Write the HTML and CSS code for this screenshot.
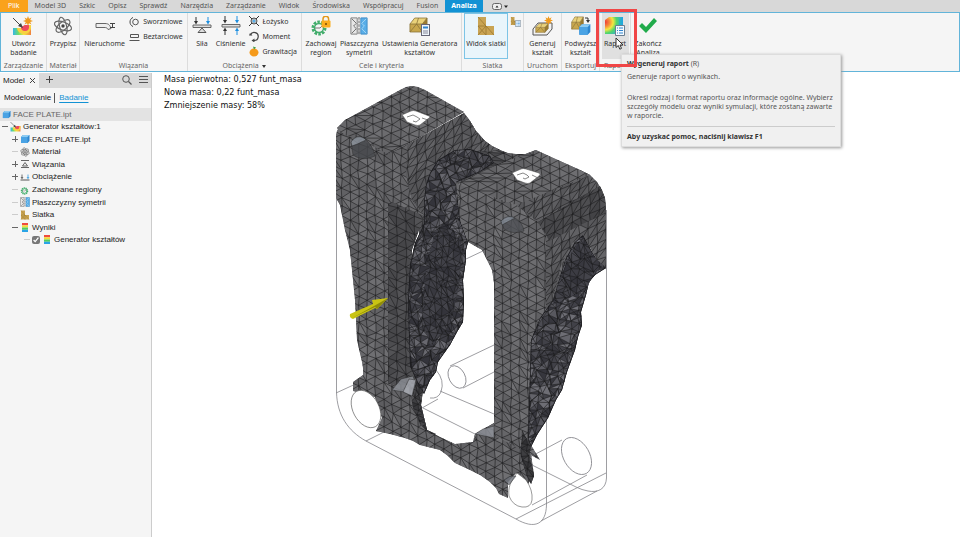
FILE: index.html
```html
<!DOCTYPE html>
<html lang="pl">
<head>
    <meta charset="UTF-8">
    <meta name="viewport" content="width=device-width, initial-scale=1.0">
    <title>FACE PLATE.ipt</title>
    <link rel="stylesheet" href="styles.css">
</head>
<body>
    <svg class="defs" aria-hidden="true">
        <defs>
            <linearGradient id="heat" x1="0" y1="0" x2="1" y2="0">
                <stop offset="0" stop-color="#35b6e8"/>
                <stop offset=".3" stop-color="#6fdc6a"/>
                <stop offset=".6" stop-color="#f5e642"/>
                <stop offset="1" stop-color="#f0803c"/>
            </linearGradient>
            <radialGradient id="spot" cx="0" cy=".3" r="1">
                <stop offset="0" stop-color="#ee3a3a"/>
                <stop offset=".25" stop-color="#f58a3c"/>
                <stop offset=".45" stop-color="#f5e642"/>
                <stop offset=".65" stop-color="#52d66a"/>
                <stop offset="1" stop-color="#29a5e8"/>
            </radialGradient>
            <symbol id="i-cube" viewBox="0 0 10 10">
                <path d="M1 3L3 1h6.500v6L7.500 9H1z" fill="#2d86cf"/>
                <path d="M1 3h6.500v6H1z" fill="#4aa3e4"/>
                <path d="M1 3l2-2h6.500l-2 2z" fill="#8ccbf2"/>
            </symbol>
            <symbol id="i-atom" viewBox="0 0 20 20">
                <g fill="none" stroke="#666" stroke-width="1.200">
                    <ellipse cx="10" cy="10" rx="9" ry="4" transform="rotate(20 10 10)"/>
                    <ellipse cx="10" cy="10" rx="9" ry="3.500" transform="rotate(75 10 10)"/>
                    <ellipse cx="10" cy="10" rx="8.500" ry="4" transform="rotate(-40 10 10)"/>
                </g>
                <circle cx="10" cy="10" r="1.700" fill="#444"/>
            </symbol>
            <symbol id="i-study" viewBox="0 0 20 20">
                <path d="M1 12h8l4-3h6v10H1z" fill="url(#heat)"/>
                <path d="M5 12a7 6 0 0 0 14 0V9h-6l-4 3z" fill="#f7d33f"/>
                <path d="M9 11a4 4 0 0 0 8 0V9h-4z" fill="#ee4a5e"/>
                <path d="M1 2l9 9" stroke="#444" fill="none"/>
                <path d="M11 12L6 10l3-3z" fill="#444"/>
            </symbol>
            <symbol id="i-star" viewBox="0 0 10 10">
                <path d="M5 0l1 2.800L8.500 1.500 7.200 4 10 5 7.200 6l1.300 2.500L6 7.200 5 10 4 7.200 1.500 8.500 2.800 6 0 5l2.800-1L1.500 1.500 4 2.800z" fill="#f09a1c"/>
            </symbol>
            <symbol id="i-siatka" viewBox="0 0 20 20">
                <path d="M2 1h8v9h8v9H2z" fill="#c9a453"/>
                <path d="M2 1l8 9 8 9M2 10h8v9M2 19l8-9M2 10l8 9" fill="none" stroke="#9a7930" stroke-width=".800"/>
            </symbol>
            <symbol id="i-sym" viewBox="0 0 20 20">
                <path d="M1 1h7v18H1z" fill="#e6e6e6" stroke="#777"/>
                <path d="M2 2l5 5-3 3 3 3-5 5" fill="none" stroke="#666"/>
                <path d="M12 1h7v18h-7z" fill="#59aee8" stroke="#3d8ac5"/>
                <path d="M18 2l-5 5 3 3-3 3 5 5" fill="none" stroke="#a8d8f5"/>
                <path d="M10 0v20" stroke="#555" stroke-dasharray="3 1"/>
            </symbol>
            <symbol id="i-gear" viewBox="0 0 20 20">
                <circle cx="9" cy="12" r="6" fill="none" stroke="#43ad6c" stroke-width="3" stroke-dasharray="2.500 1.200"/>
                <circle cx="9" cy="12" r="4.500" fill="none" stroke="#43ad6c" stroke-width="1.500"/>
                <path d="M5 12h5l4-4" fill="none" stroke="#777"/>
            </symbol>
            <symbol id="i-gold" viewBox="0 0 20 16" preserveAspectRatio="none">
                <path d="M1 7l5-6h13l-5 6z" fill="#ead27a"/>
                <path d="M14 7l5-6v8l-5 6z" fill="#9a7a2e"/>
                <path d="M1 7h13v8H1z" fill="#c8a74d"/>
                <path d="M1 7l5-6h13l-5 6zM14 7v8M1 15l7-8 6 8M10 1l-2 6M19 1v8l-5 6H1V7" fill="none" stroke="#8a7338" stroke-width=".800"/>
            </symbol>
            <symbol id="i-legend" viewBox="0 0 10 12">
                <path d="M1 0h8v3H1z" fill="#ef4b3f"/>
                <path d="M1 3h8v3H1z" fill="#f5d93b"/>
                <path d="M1 6h8v3H1z" fill="#52cf5c"/>
                <path d="M1 9h8v3H1z" fill="#2aa4e6"/>
            </symbol>
            <symbol id="i-list" viewBox="0 0 10 11">
                <path d="M.5.5h9v10h-9z" fill="#f4faff" stroke="#6b7f90"/>
                <path d="M2 3h1M4 3h4M2 5.500h1M4 5.500h4M2 8h1M4 8h4" stroke="#2f86d0"/>
            </symbol>
            <symbol id="i-fix" viewBox="0 0 20 20">
                <path d="M2 3h16M2 17h16M5 14l5-7 5 7z" fill="none" stroke="#666" stroke-width="2"/>
            </symbol>
            <symbol id="i-load" viewBox="0 0 20 20">
                <path d="M1 15h18v2H1z" fill="#555"/>
                <path d="M4 5v8M2 10l2 3 2-3" fill="none" stroke="#444" stroke-width="1.500"/>
                <path d="M16 5v8M14 10l2 3 2-3" fill="none" stroke="#2a94dc" stroke-width="1.500"/>
            </symbol>
        </defs>
    </svg>

    <header class="ribbon">
        <nav class="tabs">
            <a class="tab file" href="#">Plik</a>
            <a class="tab" href="#">Model 3D</a>
            <a class="tab" href="#">Szkic</a>
            <a class="tab" href="#">Opisz</a>
            <a class="tab" href="#">Sprawdź</a>
            <a class="tab" href="#">Narzędzia</a>
            <a class="tab" href="#">Zarządzanie</a>
            <a class="tab" href="#">Widok</a>
            <a class="tab" href="#">Środowiska</a>
            <a class="tab" href="#">Współpracuj</a>
            <a class="tab" href="#">Fusion</a>
            <a class="tab active" href="#">Analiza</a>
            <button class="tab-toggle" aria-label="Minimalizuj wstążkę">
                <svg width="16" height="7" viewBox="0 0 16 7"><rect x=".5" y=".5" width="9" height="6" rx="2" fill="#eee" stroke="#666"/><path d="M3.500 4.500L5 2.500l1.500 2zM12 2.500h4l-2 2.500z" fill="#222"/></svg>
            </button>
        </nav>

        <div class="groups">
            <section class="group g-manage">
                <div class="tools">
                    <button class="tool">
                        <svg width="22" height="20" viewBox="0 0 22 20"><use href="#i-study" width="20" height="20"/><use href="#i-star" x="11" y="0" width="10" height="10"/></svg>
                        <span>Utwórz<br>badanie</span>
                    </button>
                </div>
                <h2>Zarządzanie</h2>
            </section>
            <section class="group g-material">
                <div class="tools">
                    <button class="tool">
                        <svg width="20" height="20"><use href="#i-atom"/></svg>
                        <span>Przypisz</span>
                    </button>
                </div>
                <h2>Materiał</h2>
            </section>
            <section class="group g-bind">
                <div class="tools">
                    <button class="tool">
                        <svg width="22" height="20" viewBox="0 0 22 20"><path d="M2 7.500h9c4 0 5 2 6 5l-3 1c-1-2-2-2-4-2H2z" fill="#eee" stroke="#666"/><path d="M16 7.500h5M16 11.500h5M18.500 7.500v4" stroke="#444" fill="none"/></svg>
                        <span>Nieruchome</span>
                    </button>
                    <div class="stack">
                        <button><svg width="11" height="10" viewBox="0 0 11 10"><circle cx="6.500" cy="5" r="2.800" fill="none" stroke="#555"/><path d="M4 .5C0 2 0 8 4 9.500" fill="none" stroke="#444"/></svg>Sworzniowe</button>
                        <button><svg width="11" height="10" viewBox="0 0 11 10"><path d="M1.500 2.500h8v3h-8zM.5 8.500h10" fill="none" stroke="#555"/></svg>Beztarciowe</button>
                    </div>
                </div>
                <h2>Wiązania</h2>
            </section>
            <section class="group g-loads">
                <div class="tools">
                    <button class="tool">
                        <svg width="20" height="20" viewBox="0 0 20 20"><path d="M1 9h18v2.500H1z" fill="#ddd" stroke="#666"/><path d="M10 12l4 4.500H6z" fill="#ddd" stroke="#555"/><path d="M4 1v5" stroke="#333"/><path d="M2 5h4L4 8.500z" fill="#333"/><path d="M16 1v5" stroke="#1e8fe0"/><path d="M14 5h4l-2 3.500z" fill="#1e8fe0"/></svg>
                        <span>Siła</span>
                    </button>
                    <button class="tool">
                        <svg width="20" height="20" viewBox="0 0 20 20"><path d="M1 8.500h18v2.500H1z" fill="#ddd" stroke="#666"/><path d="M4 0v5M4 14v5" stroke="#333"/><path d="M2 4h4L4 7.500zM2 15h4l-2-3.500z" fill="#333"/><path d="M16 0v5M16 14v5" stroke="#1e8fe0"/><path d="M14 4h4l-2 3.500zM14 15h4l-2-3.500z" fill="#1e8fe0"/></svg>
                        <span>Ciśnienie</span>
                    </button>
                    <div class="stack">
                        <button><svg width="10" height="11" viewBox="0 0 10 11"><circle cx="5" cy="5" r="3" fill="#bbb" stroke="#555"/><path d="M0 0l3 3M10 0L7 3M0 10l3-3M10 10L7 7" stroke="#333"/><circle cx="5" cy="5" r="1.500" fill="#59aee8"/></svg>Łożysko</button>
                        <button><svg width="10" height="11" viewBox="0 0 10 11"><path d="M1.500 4A4 4 0 1 1 5 9.500" fill="none" stroke="#444" stroke-width="1.200"/><path d="M5.500 7.500v4L2.500 9.500zM0 4.500h3.500L1 2z" fill="#444"/></svg>Moment</button>
                        <button><svg width="10" height="11" viewBox="0 0 10 11"><ellipse cx="5" cy="6.500" rx="4.500" ry="4" fill="#f59a1b"/><path d="M5 3.500L4 .5l3 1z" fill="#3f9a43"/></svg>Grawitacja</button>
                    </div>
                </div>
                <h2>Obciążenia <i class="caret"></i></h2>
            </section>
            <section class="group g-goals">
                <div class="tools">
                    <button class="tool">
                        <svg width="22" height="20" viewBox="0 0 22 20"><use href="#i-gear" width="20" height="20"/><path d="M13 5V3a2.800 2.800 0 0 1 5.600 0v2" fill="none" stroke="#e2981a" stroke-width="1.500"/><rect x="11.500" y="4.500" width="9" height="7" rx="1" fill="#fbad1d"/><circle cx="16" cy="8" r="1" fill="#7b4d00"/></svg>
                        <span>Zachowaj<br>region</span>
                    </button>
                    <button class="tool">
                        <svg width="18" height="20"><use href="#i-sym"/></svg>
                        <span>Płaszczyzna<br>symetrii</span>
                    </button>
                    <button class="tool">
                        <svg width="22" height="20" viewBox="0 0 22 20"><use href="#i-gold" width="19" height="16" y="1"/><rect x="12.500" y="8.500" width="8" height="11" fill="#eef5fb" stroke="#667"/><path d="M14 10.500h5v2h-5z" fill="#2f86d0"/><path d="M14 15h5M14 17h5" stroke="#889"/></svg>
                        <span>Ustawienia Generatora<br>kształtów</span>
                    </button>
                </div>
                <h2>Cele i kryteria</h2>
            </section>
            <section class="group g-mesh">
                <div class="tools">
                    <button class="tool pressed">
                        <svg width="20" height="20"><use href="#i-siatka"/></svg>
                        <span>Widok siatki</span>
                    </button>
                    <button class="tool-small" aria-label="Ustawienia siatki"><svg width="11" height="11" viewBox="0 0 11 11"><use href="#i-siatka" width="9" height="10"/><use href="#i-list" x="5" y="4" width="6" height="7"/></svg></button>
                </div>
                <h2>Siatka</h2>
            </section>
            <section class="group g-run">
                <div class="tools">
                    <button class="tool">
                        <svg width="22" height="20" viewBox="0 0 22 20"><path d="M1 13l5-6h14v6l-5 6H1z" fill="#f2f2f2" stroke="#555"/><use href="#i-gold" x="3" y="7" width="14" height="10"/><use href="#i-star" x="12" width="9" height="9"/></svg>
                        <span>Generuj<br>kształt</span>
                    </button>
                </div>
                <h2>Uruchom</h2>
            </section>
            <section class="group g-export">
                <div class="tools">
                    <button class="tool">
                        <svg width="22" height="20" viewBox="0 0 22 20"><use href="#i-gold" x="1" width="13" height="14"/><use href="#i-cube" x="8" y="7" width="13" height="13"/><path d="M15 2h3v3" fill="none" stroke="#333"/><path d="M16 4h4l-2 3z" fill="#333"/></svg>
                        <span>Podwyższ<br>kształt</span>
                    </button>
                </div>
                <h2>Eksportuj</h2>
            </section>
            <section class="group g-report">
                <div class="tools">
                    <button class="tool hover" aria-describedby="tip">
                        <svg width="22" height="20" viewBox="0 0 22 20"><path d="M1 4l4-3h14v13l-4 4H1z" fill="url(#spot)"/><path d="M15 4l4-3v13l-4 4z" fill="#18a7dc" opacity=".5"/><use href="#i-list" x="11" y="9" width="10" height="11"/></svg>
                        <span>Raport</span>
                    </button>
                </div>
                <h2>Raport</h2>
                <div class="highlight"></div>
                <svg class="cursor" width="9" height="13" viewBox="0 0 9 13"><path d="M1 1v9.500l2.300-2 1.500 3.700 1.700-.800L5 8h3z" fill="#fff" stroke="#333"/></svg>
                <div class="tooltip" id="tip" role="tooltip">
                    <p><b>Wygeneruj raport</b> (R)</p>
                    <p class="lead">Generuje raport o wynikach.</p>
                    <p class="text">Określ rodzaj i format raportu oraz informacje ogólne. Wybierz<br>szczegóły modelu oraz wyniki symulacji, które zostaną zawarte<br>w raporcie.</p>
                    <p class="help"><b>Aby uzyskać pomoc, naciśnij klawisz F1</b></p>
                </div>
            </section>
            <section class="group g-end">
                <div class="tools">
                    <button class="tool">
                        <svg width="20" height="20" viewBox="0 0 20 20"><path d="M1 10l3-3 4 4L16 2l3 3L8 17z" fill="#21ab4b"/></svg>
                        <span>Zakończ<br>Analiza</span>
                    </button>
                </div>
            </section>
        </div>
    </header>

    <div class="workspace">
        <aside class="browser">
            <div class="browser-tabs">
                <button class="browser-tab">Model <svg width="7" height="7" viewBox="0 0 7 7"><path d="M1 1l5 5M6 1L1 6" stroke="#444"/></svg></button>
                <button aria-label="Dodaj"><svg width="7" height="7" viewBox="0 0 7 7"><path d="M0 3.500h7M3.500 0v7" stroke="#444"/></svg></button>
                <button class="search" aria-label="Szukaj"><svg width="10" height="10" viewBox="0 0 10 10"><circle cx="4" cy="4" r="3.300" fill="none" stroke="#555"/><path d="M6.500 6.500l3 3" stroke="#555" stroke-width="1.300"/></svg></button>
                <button aria-label="Menu"><svg width="9" height="9" viewBox="0 0 9 9"><path d="M0 1.500h9M0 4.500h9M0 7.500h9" stroke="#555"/></svg></button>
            </div>
            <div class="modes">
                <a href="#">Modelowanie</a>
                <a class="current" href="#">Badanie</a>
            </div>
            <ul class="tree">
                <li class="root"><svg width="9" height="9"><use href="#i-cube"/></svg>FACE PLATE.ipt</li>
                <li class="level1"><i class="minus"></i><svg width="11" height="11"><use href="#i-study"/></svg>Generator kształtów:1</li>
                <li class="level2"><i class="plus"></i><svg width="10" height="10"><use href="#i-cube"/></svg>FACE PLATE.ipt</li>
                <li class="level2"><i class="leaf"></i><svg width="10" height="10"><use href="#i-atom"/></svg>Materiał</li>
                <li class="level2"><i class="plus"></i><svg width="10" height="10"><use href="#i-fix"/></svg>Wiązania</li>
                <li class="level2"><i class="plus"></i><svg width="10" height="10"><use href="#i-load"/></svg>Obciążenie</li>
                <li class="level2"><i class="leaf"></i><svg width="10" height="10"><use href="#i-gear"/></svg>Zachowane regiony</li>
                <li class="level2"><i class="leaf"></i><svg width="10" height="10"><use href="#i-sym"/></svg>Płaszczyzny symetrii</li>
                <li class="level2"><i class="leaf"></i><svg width="10" height="10"><use href="#i-siatka"/></svg>Siatka</li>
                <li class="level2"><i class="minus"></i><svg width="10" height="9"><use href="#i-legend"/></svg>Wyniki</li>
                <li class="level3"><i class="leaf"></i><label><input type="checkbox" checked><svg width="10" height="9"><use href="#i-legend"/></svg>Generator kształtów</label></li>
            </ul>
        </aside>

        <main class="canvas">
            <svg class="model" viewBox="152 73 808 464" preserveAspectRatio="xMinYMin meet" role="img" aria-label="Siatka modelu">
                <g class="wire">
                    <path d="M336.500 135V392C337 415 348 431 366 441L516 519C535 530 546 524 546.500 505V300"/>
                    <path d="M606.500 210V478C606 489 598 493 588 491Q582 490 576 487L530 464M541 521L597 491M516 519L606 473M532 505L587 475M530 457L562 440"/>
                    <path d="M336 393L360 382M366 441L384 432M440 391L494 414M423 408L475 434M466 259L485 250M450 366L494 345M463 388L494 372M422 408L438 399M436 370Q445 380 441 392Q438 399 430 398"/>
                    <ellipse cx="576.500" cy="456" rx="13" ry="20" transform="rotate(-30 576.500 456)"/>
                    <ellipse cx="457" cy="377" rx="8" ry="12" transform="rotate(-28 457 377)"/>
                </g>
                <g id="mesh"></g>
                <g class="hole">
                    <path d="M403 116Q401 115 404 114L411 111Q413 110 416 111L429 116Q431 117 429 118L420 125Q418 126 415 125L407 122z"/>
                    <path d="M513 174Q511 173 514 172L521 169Q523 168 526 169L539 173Q541 174 539 176L530 183Q528 184 525 183L517 180z"/>
                    <ellipse cx="366" cy="409" rx="13" ry="20" transform="rotate(-28 366 409)"/>
                    <path d="M517 473C510 482 508 488 509 496Q513 506 522 507Q531 508 532 500Q533 490 526 480Q521 476 517 473z"/>
                </g>
                <path class="mark" d="M407 117l6-2 4 2 3 2-4 3-3-1M517 175l6-2 4 2 2 2-4 2-2-1M422 118l6 2M532 175l6 3"/>
                <g class="bore">
                    <path d="M351 142q5-8 13-4q9 7 11 18q-13 6-22-1z" fill="#46484c"/>
                    <path d="M351 142q5-8 13-4l2 2q-8 4-14 6z" fill="#8b929c"/>
                    <path d="M501 221q7-7 14-3q8 5 9 13q-12 4-20-2z" fill="#505257"/>
                    <path d="M501 221q7-7 14-3q-6 3-13 7z" fill="#858d98"/>
                    <path d="M392 390L401 379L413 376L416 384L410 395L404 392z" fill="#8d9097"/>
                    <path d="M403 392L409 379L416 380L412 396z" fill="#b2b5bd"/>
                    <path d="M475 434L483 429L494 426V438z" fill="#8f929a"/>
                    <path d="M504 480q5-5 12-4l-7 9z" fill="#6c7078"/>
                </g>
                <path class="arrow-body" d="M350 314L373 304L372 300L388 298L377 309L375 308L353 319Q349 318 350 314z"/>
                <path class="arrow-shade" d="M352 318L375 307L377 309L388 298L374 306z"/>
            </svg>
            <div class="mass">
                <p>Masa pierwotna: 0,527 funt_masa</p>
                <p>Nowa masa: 0,22 funt_masa</p>
                <p>Zmniejszenie masy: 58%</p>
            </div>
        </main>
    </div>
    <script src="mesh.js"></script>
</body>
</html>
```

FILE: styles.css
```css
* {
    box-sizing: border-box;
}

body {
    margin: 0;
    height: 100vh;
    display: flex;
    flex-direction: column;
    font-family: "Noto Sans", sans-serif;
    font-size: 7px;
    color: #333;
    background: #fff;
    overflow: hidden;
}

h2, p, ul {
    margin: 0;
    padding: 0;
}

button {
    border: 0;
    padding: 0;
    background: none;
    font: inherit;
    color: inherit;
}

a {
    color: inherit;
    text-decoration: none;
}

svg {
    flex: none;
}

.defs {
    position: absolute;
    width: 0;
    height: 0;
}

/* ribbon */
.tabs {
    display: flex;
    gap: 1px;
    height: 12px;
    line-height: 12px;
    background: #d8d8d8;
    color: #555;
}

.tab {
    padding: 0 6px;
}

.tab.file {
    padding: 0 8px;
    background: #faa21b;
    color: #fff;
}

.tab.active {
    background: #1292d4;
    color: #fff;
    font-weight: bold;
}

.tab-toggle {
    display: flex;
    align-items: center;
    margin-left: 8px;
}

.groups {
    display: flex;
    height: 60px;
    background: #f5f5f5;
    border: 1px solid #62b4d9;
}

.group {
    position: relative;
    flex: none;
    display: flex;
    flex-direction: column;
    justify-content: space-between;
    border-right: 1px solid #dcdcdc;
}

.group h2 {
    font-size: 7px;
    font-weight: normal;
    line-height: 11px;
    text-align: center;
    color: #666;
    white-space: nowrap;
}

.g-manage { width: 46px; }
.g-material { width: 33px; }
.g-bind { width: 108px; }
.g-loads { width: 114px; }
.g-goals { width: 160px; }
.g-mesh { width: 62px; }
.g-run, .g-export { width: 38px; }
.g-report { width: 31px; }
.g-end { border: 0; width: 34px; }

.tools {
    display: flex;
    justify-content: space-evenly;
    height: 46px;
}

.tool {
    display: flex;
    flex-direction: column;
    align-items: center;
    padding-top: 3px;
    line-height: 9px;
    white-space: nowrap;
}

.tool span {
    margin-top: 3px;
}

.tool.pressed {
    padding: 2px 1px 0;
    background: #e9f5fb;
    border: 1px solid #7cc4e6;
}

.tool.hover {
    width: 27px;
    background: #e0e0e0;
}

.tool-small {
    align-self: flex-start;
    padding-top: 3px;
}

.stack {
    display: flex;
    flex-direction: column;
    gap: 4px;
    padding-top: 3px;
}

.stack button {
    display: flex;
    align-items: center;
    gap: 3px;
    height: 11px;
}

.caret {
    display: inline-block;
    margin-left: 2px;
    border: 2px solid transparent;
    border-top: 3px solid #333;
    border-bottom: 0;
    vertical-align: middle;
}

.highlight {
    position: absolute;
    z-index: 3;
    left: -4px;
    top: -4px;
    width: 41px;
    height: 58px;
    border: 3px solid #f04646;
}

.cursor {
    position: absolute;
    z-index: 4;
    left: 15px;
    top: 24px;
}

.tooltip {
    position: absolute;
    z-index: 2;
    left: 21px;
    top: 41px;
    width: 220px;
    padding: 4px 5px 5px;
    line-height: 9px;
    white-space: nowrap;
    color: #555;
    background: #f0f0f0;
    border: 1px solid #ddd;
    box-shadow: 1px 1px 3px #999;
}

.tooltip b {
    color: #333;
}

.tooltip .lead {
    margin-top: 4px;
}

.tooltip .text {
    margin-top: 12px;
}

.tooltip .help {
    margin-top: 6px;
    padding-top: 5px;
    border-top: 1px solid #ccc;
}

/* model browser */
.workspace {
    flex: 1;
    display: flex;
    min-height: 0;
    padding-top: 1px;
}

.browser {
    width: 152px;
    background: #f5f5f5;
    border-right: 1px solid #ccc;
    font-family: "Liberation Sans", sans-serif;
    font-size: 8px;
    color: #222;
}

.browser-tabs {
    display: flex;
    align-items: center;
    gap: 7px;
    height: 15px;
    padding-right: 3px;
    background: #d9d9d9;
}

.browser-tab {
    display: flex;
    align-items: center;
    gap: 4px;
    height: 15px;
    padding: 0 3px;
    background: #f5f5f5;
}

.search {
    margin-left: auto;
}

.modes {
    display: flex;
    padding: 5px 4px;
    line-height: 10px;
}

.modes a + a {
    margin-left: 3px;
    padding-left: 4px;
    border-left: 1px solid #555;
}

.modes .current {
    color: #1292d4;
    text-decoration: underline;
    text-underline-offset: 2px;
}

.tree {
    display: grid;
    grid-auto-rows: 1fr;
    height: 138px;
    list-style: none;
}

.tree li, .tree label {
    display: flex;
    align-items: center;
    gap: 2px;
    white-space: nowrap;
}

.tree .root {
    padding-left: 2px;
    background: #e3e3e3;
    color: #666;
}

.tree .level1 {
    padding-left: 2px;
}

.tree .level2 {
    padding-left: 12px;
}

.tree .level3 {
    padding-left: 24px;
}

.tree i {
    width: 6px;
    height: 6px;
    background: linear-gradient(#666, #666) center / 6px 1px no-repeat;
}

.tree .plus {
    background: linear-gradient(#666, #666) center / 6px 1px no-repeat, linear-gradient(#666, #666) center / 1px 6px no-repeat;
}

.tree .leaf {
    background: linear-gradient(#ccc, #ccc) center / 6px 1px no-repeat;
}

.tree input {
    width: 8px;
    height: 8px;
    margin: 0;
    accent-color: #777;
}

/* graphics window */
.canvas {
    position: relative;
    flex: 1;
    min-width: 0;
}

.model {
    display: block;
    width: 100%;
    height: 100%;
}

.mass {
    position: absolute;
    left: 12px;
    top: 0;
    font-family: "DejaVu Sans Condensed", sans-serif;
    font-size: 9px;
    line-height: 13px;
    color: #111;
}

.wire {
    fill: none;
    stroke: #85858a;
    stroke-width: .8;
}

.hole {
    fill: #fff;
    stroke: #555;
    stroke-width: .6;
}

.mark {
    fill: none;
    stroke: #555;
    stroke-width: .7;
}

.bore {
    stroke: #222;
    stroke-width: .5;
    opacity: .8;
}

.arrow-body {
    fill: #c9c413;
}

.arrow-shade {
    fill: #8f8b0a;
}
```

FILE: mesh.js
```js
const NS = "http://www.w3.org/2000/svg";
const mesh = document.getElementById("mesh");

// u and v are the edge vectors of the lattice, grey is the base shade
const faces = [
    { // saddle between the bosses
        pts: "415,150 470,121 476,131 485,141 492,146 500,150 508,153 516,154 526,154 536,150 540,160 500,185 470,215 460,225 420,250",
        u: [8, 4], v: [7, -4], jitter: 1.5, grey: 84, spread: 12
    },
    { // left column and lower web
        pts: "336,135 337,131 339,127 345,121 408,144 424,153 432,175 424,215 412,240 412,340 424,380 421,405 427,430 440,437 455,444 473,442 475,434 494,423 530,400 529,440 534,475 528,484 516,473 508,482 508,498 499,494 496,488 490,482 480,475 470,470 455,463 448,456 440,450 420,445 413,441 405,438 390,434 376,431 382,418 375,397 353,391 353,382 363,375 363,368 362,362 357,340 355,300 353,280 350,250 345,230 340,205 336,198",
        u: [8.5, 4.5], v: [0, 9], jitter: 0.9, grey: 102, spread: 9
    },
    { // lower web inner edge
        pts: "408,378 424,384 421,405 427,430 436,434 430,434 420,424 413,408",
        u: [5, 3], v: [1, 6], jitter: 2, grey: 66, spread: 16
    },
    { // recessed channel
        pts: "388,204 392,202 424,216 412,250 410,345 420,370 410,385 388,384",
        u: [9, 4], v: [0, 9], jitter: 0.8, grey: 76, spread: 7
    },
    { // left boss, side
        pts: "408,144 464,113 468,118 470,121 476,131 485,141 492,146 500,150 470,152 455,185 424,215 412,200 406,175",
        u: [9, -4.5], v: [0, 9], jitter: 1.2, grey: 90, spread: 9
    },
    { // left boss, top
        pts: "337,128 345,120 400,90 406,87 412,86 418,87 425,90 464,112 408,144 388,154 365,142 345,135",
        u: [9, 4.5], v: [9, -4.5], jitter: 0.8, grey: 104, spread: 7
    },
    { // left inner wall
        pts: "455,150 470,149 490,156 494,163 480,172 457,182 458,200 460,220 468,242 466,250 466,260 463,280 464,300 463,322 457,332 450,345 438,362 436,372 430,380 424,394 418,384 410,366 409,335 408,300 410,265 415,243 424,224 424,200 426,185 430,173 438,160",
        u: [5.5, 2], v: [-2, 6], jitter: 2.6, grey: 78, spread: 26
    },
    { // shaded hollow of the left wall
        pts: "434,235 452,228 462,245 458,290 450,325 430,345 422,320 426,270",
        u: [6, 3], v: [0, 7], jitter: 2.4, grey: 62, spread: 10
    },
    { // front of the right boss and the right leg
        pts: "456,182 516,205 545,215 583,235 565,260 553,300 540,322 531,345 528,440 540,460 494,435 494,283 492,270 482,250 468,242 460,220",
        u: [8.5, 4.5], v: [0, 9], jitter: 0.9, grey: 104, spread: 8
    },
    { // right boss, rounded side
        pts: "516,205 580,170 590,175 597,182 602,190 605,198 606,210 606,268 598,262 583,235 572,243 560,268 553,300 546,316 546,236 538,222",
        u: [9, -4.5], v: [0, 9], jitter: 0.9, grey: 92, spread: 9
    },
    { // shaded band of the rounding
        pts: "538,222 600,186 605,198 606,212 549,241 546,234",
        u: [9, -4.5], v: [0, 9], jitter: 0.7, grey: 74, spread: 7
    },
    { // right boss, top
        pts: "457,184 480,172 520,156 536,150 560,161 580,170 590,175 516,205",
        u: [9, 4.5], v: [9, -4.5], jitter: 0.8, grey: 104, spread: 6
    },
    { // right inner wall
        pts: "583,235 575,242 565,260 553,300 540,318 531,340 528,440 531,447 537,435 548,418 556,400 562,390 567,372 575,350 578,337 582,325 581,312 586,295 589,282 595,275 606,268 598,262 591,250",
        u: [5.5, 2], v: [-2, 6], jitter: 2.8, grey: 82, spread: 28
    },
    { // shaded hollow of the right wall
        pts: "583,237 593,256 604,266 594,272 586,290 553,305 558,285 568,258",
        u: [7, 3], v: [0, 7], jitter: 2.4, grey: 62, spread: 10
    },
    { // lower right edge
        pts: "522,430 531,447 529,456 532,466 534,476 531,484 526,474 521,456",
        u: [5, 2], v: [0, 6], jitter: 1.5, grey: 60, spread: 12
    }
];

let seed = 7;
function random() {
    seed = (seed * 16807) % 2147483647;
    return seed / 2147483647;
}

function add(parent, name, attrs) {
    const el = document.createElementNS(NS, name);
    for (const key in attrs) {
        el.setAttribute(key, attrs[key]);
    }
    parent.appendChild(el);
    return el;
}

function segment(a, b) {
    return `M${a[0].toFixed(1)} ${a[1].toFixed(1)}L${b[0].toFixed(1)} ${b[1].toFixed(1)}`;
}

function drawFace(face, index) {
    const pts = face.pts.split(" ").map(p => p.split(",").map(Number));
    const xs = pts.map(p => p[0]);
    const ys = pts.map(p => p[1]);
    const x0 = Math.min(...xs), x1 = Math.max(...xs);
    const y0 = Math.min(...ys), y1 = Math.max(...ys);
    const cx = (x0 + x1) / 2, cy = (y0 + y1) / 2;
    const rough = face.jitter > 2;

    const clip = add(mesh, "clipPath", { id: "face" + index });
    add(clip, "polygon", { points: face.pts });
    const group = add(mesh, "g", { "clip-path": `url(#face${index})` });
    const base = `rgb(${face.grey},${face.grey},${face.grey + 3})`;
    add(group, "polygon", { points: face.pts, fill: base });

    const nodes = {};
    function node(i, j) {
        const key = i + "_" + j;
        if (!nodes[key]) {
            nodes[key] = [
                cx + i * face.u[0] + j * face.v[0] + (random() - 0.5) * 2 * face.jitter,
                cy + i * face.u[1] + j * face.v[1] + (random() - 0.5) * 2 * face.jitter
            ];
        }
        return nodes[key];
    }

    const shades = {};
    let lines = "";
    const n = 65;
    for (let i = -n; i < n; i++) {
        for (let j = -n; j < n; j++) {
            const x = cx + i * face.u[0] + j * face.v[0];
            const y = cy + i * face.u[1] + j * face.v[1];
            if (x < x0 - 20 || x > x1 + 20 || y < y0 - 20 || y > y1 + 20) continue;
            const a = node(i, j), b = node(i + 1, j), c = node(i + 1, j + 1), d = node(i, j + 1);
            const even = random() < 0.8;
            const tris = even ? [[a, b, d], [b, c, d]] : [[a, b, c], [a, c, d]];
            lines += segment(a, b) + segment(a, d) + (even ? segment(b, d) : segment(a, c));
            // rough walls carry extra short edges
            if (rough && random() < 0.4) {
                lines += segment(a, c);
            }
            tris.forEach(t => {
                const k = Math.floor(random() * 6);
                const line = t.map(p => p[0].toFixed(1) + " " + p[1].toFixed(1)).join("L");
                shades[k] = (shades[k] || "") + "M" + line + "z";
            });
        }
    }

    for (const k in shades) {
        const g = Math.round(face.grey + (k - 2.5) / 2.5 * face.spread);
        add(group, "path", { d: shades[k], fill: `rgb(${g},${g},${g + (rough ? 7 : 3)})` });
    }
    add(group, "path", {
        d: lines,
        fill: "none",
        stroke: "#1c1c1f",
        "stroke-width": 0.6
    });
    if (face.spread > 20) {
        add(group, "polygon", { points: face.pts, fill: "none", stroke: "#1c1c1f", "stroke-width": 1.5 });
    }
}

faces.forEach(drawFace);
```
